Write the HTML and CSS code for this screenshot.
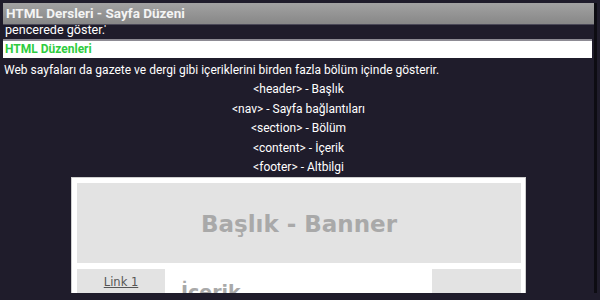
FILE: index.html
```
<!DOCTYPE html>
<html lang="tr">
<head>
    <meta charset="UTF-8">
    <title>HTML Dersleri - Sayfa Düzeni</title>
    <link rel="stylesheet" href="styles.css">
</head>
<body>
    <div class="window">
        <div class="title-bar">HTML Dersleri - Sayfa Düzeni</div>

        <div class="scroll-area">
            <div class="cut-line">pencerede göster.'</div>

            <div class="section-title">HTML Düzenleri</div>

            <p class="intro">Web sayfaları da gazete ve dergi gibi içeriklerini birden fazla bölüm içinde gösterir.</p>

            <ul class="tag-list">
                <li>&lt;header&gt; - Başlık</li>
                <li>&lt;nav&gt; - Sayfa bağlantıları</li>
                <li>&lt;section&gt; - Bölüm</li>
                <li>&lt;content&gt; - İçerik</li>
                <li>&lt;footer&gt; - Altbilgi</li>
            </ul>

            <!-- sample layout picture -->
            <div class="layout-sample">
                <div class="sample-banner">Başlık - Banner</div>
                <div class="sample-row">
                    <div class="sample-nav"><a href="#">Link 1</a></div>
                    <div class="sample-main">İçerik</div>
                    <div class="sample-aside"></div>
                </div>
            </div>
        </div>
    </div>
</body>
</html>
```

FILE: styles.css
```
:root {
    --background-dark: #1f1c2b;
    --title-top: #a2a2a2;
    --title-bottom: #878787;
    --green: #2ecc40;
    --sample-gray: #e3e3e3;
}

body {
    margin: 0;
    background: var(--background-dark);
    font-family: Roboto, 'Noto Sans', sans-serif;
    color: white;
    height: 300px;
    overflow: hidden;
}

.window {
    margin: 3px 3px 0 3px;
    height: 290px;
    border-right: 3px solid #0d0c12;
    display: flex;
    flex-direction: column;
}

.title-bar {
    position: relative;
    z-index: 1;
    height: 21px;
    line-height: 21px;
    padding-left: 3px;
    background: linear-gradient(var(--title-top), var(--title-bottom));
    border-bottom: 1px solid #4a4857;
    font-size: 13.5px;
    font-weight: bold;
    color: #f4f4f4;
}

.scroll-area {
    flex: 1;
    overflow: hidden;
}

.cut-line {
    margin-top: -3px;
    padding-left: 2px;
    font-size: 12.6px;
    line-height: 15px;
}

.section-title {
    margin-top: 2px;
    border-top: 2px solid #8d8b94;
    background: white;
    color: var(--green);
    font-size: 12px;
    font-weight: bold;
    height: 17px;
    line-height: 17px;
    padding-left: 2px;
    margin-right: 2px;
}

.intro {
    margin: 4px 0 0 1px;
    font-size: 12px;
    line-height: 16px;
}

.tag-list {
    list-style: none;
    margin: 2px 0 0 0;
    padding: 0;
    text-align: center;
    font-size: 12px;
}

.tag-list li {
    line-height: 19.6px;
}

.layout-sample {
    width: 444px;
    margin: -1px auto 0;
    padding: 5px 4px 5px 5px;
    background: white;
    border: 1px solid #cfcfcf;
}

.sample-banner {
    height: 80px;
    line-height: 82px;
    background: var(--sample-gray);
    text-align: center;
    font-family: 'DejaVu Sans', Verdana, sans-serif;
    font-size: 23px;
    font-weight: bold;
    color: #a9a9a9;
}

.sample-row {
    display: flex;
    margin-top: 6px;
    height: 40px;
}

.sample-nav {
    width: 88px;
    background: var(--sample-gray);
    text-align: center;
    padding-top: 6px;
    font-family: 'DejaVu Sans', Verdana, sans-serif;
    font-size: 11.5px;
}

.sample-nav a {
    color: #555;
}

.sample-main {
    flex: 1;
    padding: 12px 0 0 16px;
    font-family: 'DejaVu Sans', Verdana, sans-serif;
    font-size: 19px;
    font-weight: bold;
    color: #a9a9a9;
}

.sample-aside {
    width: 89px;
    background: var(--sample-gray);
}
```
